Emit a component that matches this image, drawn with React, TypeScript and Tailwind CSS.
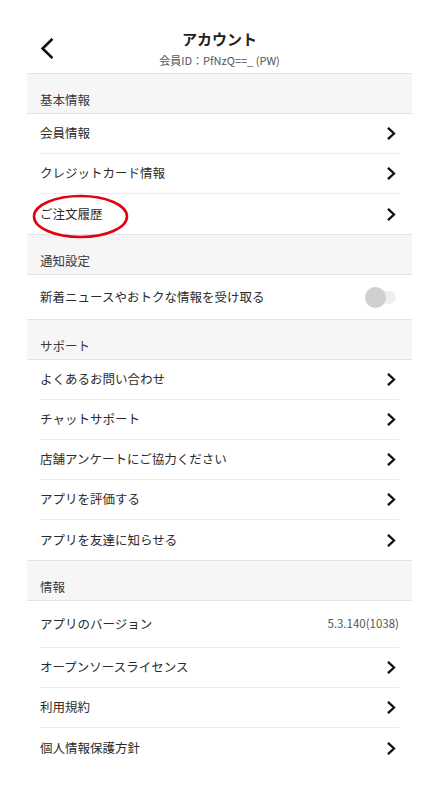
import React from "react";

const font = { fontFamily: '"Noto Sans CJK JP", "Noto Sans", sans-serif' };

const Chevron = () => (
  <svg width="9" height="13" viewBox="0 0 9 13" className="mr-[3px]">
    <polyline
      points="1.8,1.6 7,6.5 1.8,11.4"
      fill="none"
      stroke="#111"
      strokeWidth="2.3"
      strokeLinecap="square"
    />
  </svg>
);

const SectionHeader = ({ title }: { title: string }) => (
  <div className="h-[40px] flex items-end pb-[3px] px-[13px] bg-[#f6f6f6] border-b border-[#e4e4e4] text-[12.5px] leading-[20px] text-[#3a3a3a]">
    {title}
  </div>
);

const Row = ({ label }: { label: string }) => (
  <div className="h-[40px] flex items-center justify-between text-[12.5px] text-[#2b2b2b]">
    <span>{label}</span>
    <Chevron />
  </div>
);

const Section = ({
  title,
  children,
  last,
}: {
  title: string;
  children: React.ReactNode;
  last?: boolean;
}) => (
  <div className={last ? "" : "border-b border-[#e4e4e4]"}>
    <SectionHeader title={title} />
    <div className="mx-[13px] divide-y divide-[#ececec]">{children}</div>
  </div>
);

export default function App() {
  return (
    <div className="relative w-[446px] h-[792px] bg-white" style={font}>
      <div className="ml-[27px] w-[385px]">
        {/* Header */}
        <div className="h-[74px] grid grid-cols-[40px_1fr_40px] border-b border-[#e4e4e4]">
          <div className="pl-[13px] pt-[38px]">
            <svg width="14" height="21" viewBox="0 0 14 21">
              <polyline
                points="11.5,1.8 2.6,10.5 11.5,19.2"
                fill="none"
                stroke="#111"
                strokeWidth="2.6"
                strokeLinecap="square"
              />
            </svg>
          </div>
          <div className="flex flex-col items-center pt-[28px]">
            <div className="text-[15px] leading-[21px] font-bold text-[#222]">
              アカウント
            </div>
            <div className="text-[11px] leading-[15px] mt-[4px] text-[#555]">
              会員ID：PfNzQ==_ (PW)
            </div>
          </div>
          <div />
        </div>

        <Section title="基本情報">
          <Row label="会員情報" />
          <Row label="クレジットカード情報" />
          <Row label="ご注文履歴" />
        </Section>

        <Section title="通知設定">
          <div className="h-[44px] flex items-center justify-between text-[12.5px] text-[#2b2b2b]">
            <span>新着ニュースやおトクな情報を受け取る</span>
            <div className="relative w-[31px] h-[21px] mr-[3px] flex items-center">
              <div className="w-full h-[13px] rounded-full bg-[#efefef]" />
              <div className="absolute left-0 top-0 w-[21px] h-[21px] rounded-full bg-[#d0d0d0]" />
            </div>
          </div>
        </Section>

        <Section title="サポート">
          <Row label="よくあるお問い合わせ" />
          <Row label="チャットサポート" />
          <Row label="店舗アンケートにご協力ください" />
          <Row label="アプリを評価する" />
          <Row label="アプリを友達に知らせる" />
        </Section>

        <Section title="情報" last>
          <div className="h-[47px] flex items-center justify-between text-[12.5px] text-[#2b2b2b]">
            <span>アプリのバージョン</span>
            <span className="text-[11.5px] text-[#555]">5.3.140(1038)</span>
          </div>
          <Row label="オープンソースライセンス" />
          <Row label="利用規約" />
          <Row label="個人情報保護方針" />
        </Section>
      </div>

      {/* red annotation ellipse */}
      <svg
        className="absolute left-[32px] top-[194px]"
        width="97"
        height="45"
        viewBox="0 0 97 45"
      >
        <ellipse
          cx="48.5"
          cy="22.5"
          rx="46.5"
          ry="20.5"
          fill="none"
          stroke="#e3000f"
          strokeWidth="2.6"
        />
      </svg>
    </div>
  );
}
